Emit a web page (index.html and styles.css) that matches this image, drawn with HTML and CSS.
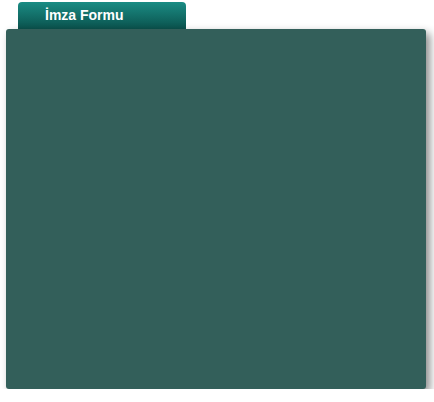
FILE: index.html
```html
<!DOCTYPE html>
<html lang="tr">
<head>
    <meta charset="utf-8">
    <title>İmza Formu</title>
    <link rel="stylesheet" href="styles.css">
</head>
<body>
    <div class="form-box">
        <div class="tab">İmza Formu</div>
        <div class="panel"></div>
    </div>
</body>
</html>
```

FILE: styles.css
```css
body {
    margin: 0;
    background-color: #ffffff;
    font-family: "Liberation Sans", Arial, sans-serif;
}
.form-box {
    padding: 2px 0 0 6px;
}
.tab {
    width: 168px;
    height: 27px;
    margin-left: 12px;
    box-sizing: border-box;
    padding: 5px 0 0 27px;
    border-radius: 4px 4px 0 0;
    background: linear-gradient(to bottom, #1a8c84, #0b524d);
    color: #ffffff;
    font-size: 14px;
    font-weight: bold;
    line-height: 16px;
}
.panel {
    width: 420px;
    height: 360px;
    border-radius: 3px;
    background-color: #335f5a;
    box-shadow: 4px 4px 8px rgba(0, 0, 0, 0.45);
}
```
